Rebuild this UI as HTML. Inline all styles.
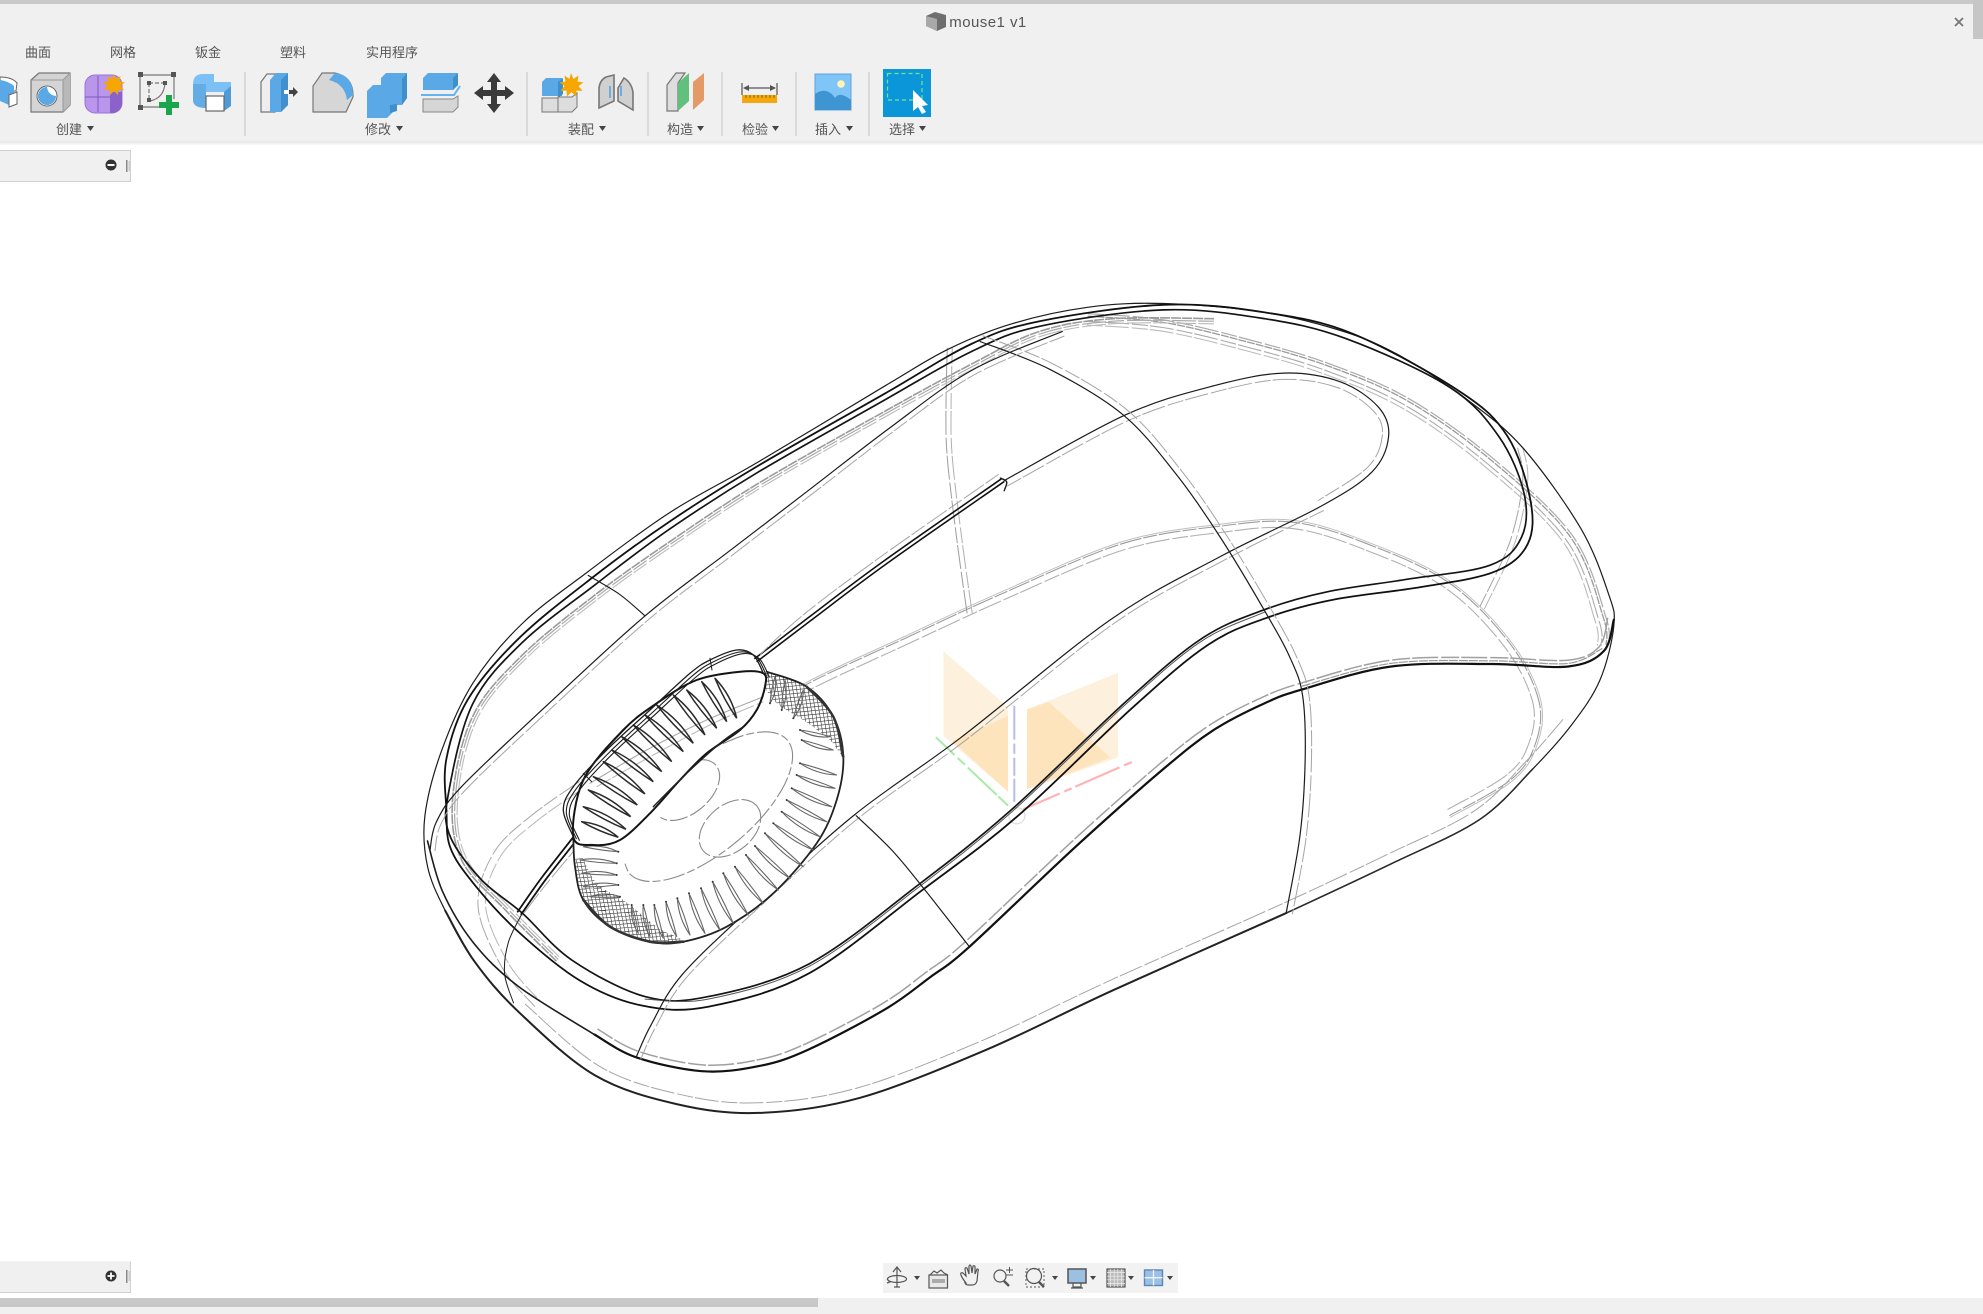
<!DOCTYPE html>
<html><head><meta charset="utf-8"><title>mouse1 v1</title>
<style>
html,body{margin:0;padding:0;background:#fff;width:1983px;height:1314px;overflow:hidden}
body{position:relative;font-family:"Liberation Sans","Noto Sans CJK SC",sans-serif}
.b{position:absolute}
.t{position:absolute;font-size:13px;line-height:16px;color:#555;transform:translateX(-50%);white-space:nowrap;filter:blur(.35px)}
svg{position:absolute;left:0;top:0}
</style></head><body>
<div class="b" style="left:0;top:0;width:1983px;height:141px;background:#f0f0f0"></div>
<div class="b" style="left:0;top:141px;width:1983px;height:4px;background:linear-gradient(#e3e3e3,#fafafa)"></div>
<div class="b" style="left:0;top:0;width:1983px;height:4px;background:#c9c9c9"></div>
<div class="b" style="left:1973px;top:0;width:10px;height:39px;background:#c6c6c6"></div>
<div class="b" style="left:0;top:150px;width:130px;height:30px;background:#f0f0f0;border:1px solid #d0d0d0;border-left:0"></div>
<div class="b" style="left:0;top:1261px;width:130px;height:30px;background:#f0f0f0;border:1px solid #d0d0d0;border-left:0;border-top-color:#f4f4f4"></div>
<div class="b" style="left:883px;top:1263px;width:295px;height:30px;background:#f2f2f2"></div>
<div class="b" style="left:0;top:1298px;width:1983px;height:16px;background:#f0f0f0"></div>
<div class="b" style="left:0;top:1298px;width:818px;height:9px;background:#c8c8c8"></div>

<div class="t" style="left:38px;top:45px">曲面</div>
<div class="t" style="left:123px;top:45px">网格</div>
<div class="t" style="left:208px;top:45px">钣金</div>
<div class="t" style="left:293px;top:45px">塑料</div>
<div class="t" style="left:392px;top:45px">实用程序</div>
<div class="t" style="left:69px;top:122px">创建</div>
<div class="t" style="left:378px;top:122px">修改</div>
<div class="t" style="left:581px;top:122px">装配</div>
<div class="t" style="left:680px;top:122px">构造</div>
<div class="t" style="left:755px;top:122px">检验</div>
<div class="t" style="left:828px;top:122px">插入</div>
<div class="t" style="left:902px;top:122px">选择</div>
<div class="t" style="left:988px;top:15px;font-size:15px;letter-spacing:.45px;color:#555">mouse1 v1</div>

<svg id="ui" width="1983" height="1314" viewBox="0 0 1983 1314" style="filter:blur(.3px)">
<!-- separators -->
<g fill="#dadada"><rect x="244" y="72" width="2" height="64"/><rect x="526" y="72" width="2" height="64"/><rect x="647" y="72" width="2" height="64"/><rect x="721" y="72" width="2" height="64"/><rect x="795" y="72" width="2" height="64"/><rect x="868" y="72" width="2" height="64"/></g>
<!-- caret triangles -->
<g fill="#444"><path d="M87 126h7l-3.500 5zM396 126h7l-3.500 5zM599 126h7l-3.500 5zM697 126h7l-3.500 5zM772 126h7l-3.500 5zM846 126h7l-3.500 5zM919 126h7l-3.500 5z"/>
<path d="M914 1276h6l-3 4zM1052 1276h6l-3 4zM1090 1276h6l-3 4zM1128 1276h6l-3 4zM1167 1276h6l-3 4z"/></g>
<!-- close -->
<path d="M1955 18l8 8M1963 18l-8 8" stroke="#777" stroke-width="1.800" fill="none"/>
<!-- doc icon -->
<path d="M926 16l9-4 11 3v12l-9 4-11-5z" fill="#6e6e6e"/><path d="M926 16l11 3v12l-11-5z" fill="#a8a8a8"/>
<!-- icon1 partial -->
<path d="M0 77q12 0 17 6l-1 8-16 0z" fill="#fff" stroke="#666"/><path d="M0 80q8 1 14 6v7l-5 3v9l-9-4z" fill="#5aa9e6"/><path d="M9 95l8-3v12l-8 3z" fill="#fff" stroke="#666"/>
<!-- icon2 -->
<path d="M31 80l8-7h31v32l-7 7H31z" fill="#d4d4d4" stroke="#777" stroke-width="1.200"/><path d="M63 80l7-7v32l-7 7z" fill="#b8b8b8"/><path d="M63 112V80h-32M63 80l7-7" fill="none" stroke="#999"/>
<circle cx="47" cy="96" r="10" fill="#fff" stroke="#666"/><path d="M47 87a9 9 0 1 0 9 9q-8-1-9-9z" fill="#5aa9e6"/>
<!-- icon3 -->
<rect x="85" y="75" width="37" height="38" rx="10" fill="#b995ec" stroke="#9a72d8"/><path d="M110 92h12v11a10 10 0 0 1-10 10h-2z" fill="#8a62ca"/><path d="M98 76v36M85 97h25" stroke="#7f5abd" fill="none"/>
<path d="M114 74l2 5 4.500-3-1 5.500 5.500 1-4.500 3 3.500 4.500-5.500-.5-.5 5.500-4-4-4 4-.5-5.500-5.500.5 3.500-4.500-4.500-3 5.500-1-1-5.500 4.500 3z" fill="#f7a600"/>
<!-- icon4 -->
<g fill="none" stroke="#777" stroke-width="1.200"><path d="M141 75h33v24M140 75v32h20"/><path d="M149 83h16M149 83v19" stroke-dasharray="4 2"/><path d="M150 101q14-3 15-18"/></g>
<g fill="#555"><rect x="138" y="72" width="5" height="5"/><rect x="171" y="72" width="5" height="5"/><rect x="138" y="105" width="5" height="5"/><rect x="147" y="81" width="4" height="4"/><rect x="163" y="81" width="4" height="4"/><rect x="147" y="98" width="4" height="4"/></g>
<path d="M166 95h6v7h7v6h-7v7h-6v-7h-7v-6h7z" fill="#1aa64a"/>
<!-- icon5 -->
<path d="M193 84q0-10 10-10h11v8l-8 0v0h25v18l-7 11v-19h-30z" fill="#7cc0f5"/><path d="M193 84h13v24q-13 0-13-8z" fill="#64ace4"/><path d="M224 92l7-6v20l-7 5z" fill="#4f9bd6"/>
<rect x="206" y="96" width="18" height="15" fill="#fff" stroke="#666" stroke-width="1.200"/>
<!-- press-pull -->
<path d="M261 112V82l6-8h8v38z" fill="#eee" stroke="#777" stroke-width="1.200"/>
<path d="M270 80l6-7h12v32l-7 7h-11z" fill="#5aa9e6"/><path d="M281 80l7-7v32l-7 7z" fill="#418fcc"/>
<path d="M284 90h9v-3l5 5-5 5v-3h-9z" fill="#444"/><rect x="284" y="90" width="5" height="4" fill="#fff"/>
<!-- fillet -->
<path d="M313 112V86l9-13h13q18 4 18 22v2l-7 15z" fill="#d6d6d6" stroke="#777" stroke-width="1.200"/>
<path d="M329 80l6-7q18 2 18 22l-6 5q-2-16-18-20z" fill="#5aa9e6"/>
<!-- combine -->
<path d="M367 91l6-6h8v-7l5-5h21v25l-5 7h-9v7l-6 6h-20z" fill="#5aa9e6"/><path d="M402 79l5-6v25l-5 7zM390 105l7-1v7l-7 2z" fill="#3f8fcb"/>
<!-- split -->
<path d="M423 78l5-5h30v12l-5 5h-30z" fill="#5aa9e6"/><path d="M453 78l5-5v12l-5 5z" fill="#3f8fcb"/>
<path d="M421 95h33l6-9" fill="none" stroke="#62b5f0" stroke-width="2"/>
<path d="M423 99h30l5-3v11l-5 5h-30z" fill="#d6d6d6" stroke="#888"/>
<!-- move -->
<path d="M494 73l7 9h-4v8h8v-4l9 7-9 7v-4h-8v8h4l-7 9-7-9h4v-8h-8v4l-9-7 9-7v4h8v-8h-4z" fill="#3a3a3a"/>
<!-- assemble -->
<path d="M542 82l4-4h16v18h-20z" fill="#5aa9e6"/><path d="M558 82l5-4v16l-5 4z" fill="#3f8fcb"/>
<rect x="542" y="98" width="16" height="14" fill="#ddd" stroke="#777"/><path d="M558 97h14l5-4v14l-5 5h-14z" fill="#ddd" stroke="#777"/>
<path d="M571 73l2.500 6 5-3.500-1 6 6 1-5 3.500 4 5-6-.5-.5 6-4.500-4.500-4.500 4.500-.5-6-6 .5 4-5-5-3.500 6-1-1-6 5 3.500z" fill="#f7a600"/>
<!-- joint -->
<g fill="#d0d0d0" stroke="#777" stroke-width="1.600"><path d="M599 108V88q1-8 7-11l8-2v26z"/><path d="M618 88l6-10q8 5 9 15v17l-15-9z"/></g>
<path d="M610 86v12M621 86v10" stroke="#4ba3e6" stroke-width="1.500" fill="none"/>
<!-- construct -->
<path d="M667 111V85l9-12h9l-7 10v28z" fill="#ddd" stroke="#777" stroke-width="1.200"/><path d="M678 83l11-10v28l-11 10z" fill="#61c07c"/><path d="M693 82l11-9v27l-11 10z" fill="#e39a66"/>
<!-- measure -->
<path d="M742 83v12M777 83v12M744 88h31" stroke="#555" stroke-width="1.200" fill="none"/><path d="M743 88l6-3v6zM776 88l-6-3v6z" fill="#555"/>
<rect x="742" y="95" width="35" height="8" fill="#f5a70c"/><path d="M746 95v3M750 95v3M754 95v3M758 95v3M762 95v3M766 95v3M770 95v3M774 95v3" stroke="#8a6a00"/>
<!-- image -->
<rect x="815" y="74" width="36" height="36" fill="#80c5f8" stroke="#5fa4d8"/><circle cx="841" cy="84" r="3.800" fill="#fdf4b5"/>
<path d="M815 110V94q6-4 11-3t9 7q3-4 7-3t9 5v10z" fill="#3f94d2"/>
<!-- select -->
<rect x="883" y="69" width="48" height="48" fill="#0a96d9"/><rect x="887.500" y="73.500" width="34.500" height="26.500" fill="none" stroke="#6fe68e" stroke-width="1.200" stroke-dasharray="4 3"/>
<path d="M913 90l15 15-6 1 4 6-4 2-4-7-5 4z" fill="#fff"/>
<!-- panel icons -->
<circle cx="111" cy="165" r="5.500" fill="#333"/><rect x="107.500" y="164" width="7" height="2" fill="#fff"/>
<rect x="126" y="160" width="1.500" height="12" fill="#888"/><rect x="128.500" y="161" width="1.500" height="10" fill="#ccc"/>
<circle cx="111" cy="1276" r="5.500" fill="#333"/><path d="M107.500 1276h7M111 1272.500v7" stroke="#fff" stroke-width="1.800"/>
<rect x="126" y="1270" width="1.500" height="13" fill="#888"/><rect x="128.500" y="1271" width="1.500" height="10" fill="#ccc"/>
<!-- bottom toolbar -->
<g fill="none" stroke="#555" stroke-width="1.200">
<path d="M897 1268v19M893 1272l4-5 4 5M894 1287h6"/><ellipse cx="897" cy="1279" rx="9.500" ry="3.500"/><path d="M887 1279l3 3-3 1" />
<rect x="929" y="1275" width="18.500" height="13" fill="#e8e8e8"/><rect x="932" y="1279" width="13" height="4" fill="#aaa" stroke="none"/><path d="M930 1275l4-4 3 2 4-3 3 3 4 2" />
<path d="M966 1283q-4-5-5-8t2-2l3 3-1-7q0-2 2-1l2 6 0-8q1-2 2 0l1 7 1-7q2-1 2 1l0 7 2-5q2 0 1 2l-1 10q-1 4-5 4h-4q-2 0-3-2z"/>
<circle cx="1000" cy="1276" r="6"/><path d="M1004 1281l5 5" stroke-width="2.400"/><path d="M1006 1270h7M1009.500 1267v6M1006 1275h7" stroke-width="1"/>
<circle cx="1034" cy="1276" r="7.500"/><path d="M1039 1282l5 5" stroke-width="2.400"/><path d="M1026 1269h18v18h-18z" stroke-dasharray="2 2" stroke-width=".9"/>
<rect x="1068" y="1269" width="18" height="14" fill="#9cc0e2" stroke-width="1.500"/><path d="M1073 1283v4h8v-4M1071 1288h12"/>
<rect x="1107" y="1269" width="18" height="18" fill="#bbb" stroke-width="1.200"/><path d="M1107 1272.600h18M1107 1276.200h18M1107 1279.800h18M1107 1283.400h18M1110.600 1269v18M1114.200 1269v18M1117.800 1269v18M1121.400 1269v18" stroke="#eee" stroke-width=".7"/>
<rect x="1144.500" y="1270" width="18" height="15.500" fill="#9cc0e2" stroke="#5c85b8" stroke-width="1.400"/><path d="M1153.500 1270v15.500M1144.500 1277.700h18" stroke="#eef4fa" stroke-width="1.300"/>
</g>
<g id="m"></g>
</svg>
<script>
var S=1.2647,NS='http://www.w3.org/2000/svg',R=document.getElementById('m');
function add(tag,a,par){var e=document.createElementNS(NS,tag);for(var k in a)e.setAttribute(k,a[k]);(par||R).appendChild(e);return e}
function off(p,d,cl){var n=p.length;return p.map(function(q,i){var a=cl?p[(i-1+n)%n]:p[Math.max(i-1,0)],b=cl?p[(i+1)%n]:p[Math.min(i+1,n-1)];var dx=b[0]-a[0],dy=b[1]-a[1],l=Math.hypot(dx,dy)||1;return [q[0]-dy/l*d,q[1]+dx/l*d]})}
function cr(p,cl){var n=p.length,s='M'+p[0][0].toFixed(1)+' '+p[0][1].toFixed(1),m=cl?n:n-1;
for(var i=0;i<m;i++){var p0=cl?p[(i-1+n)%n]:p[Math.max(i-1,0)],p1=p[i],p2=p[(i+1)%n],p3=cl?p[(i+2)%n]:p[Math.min(i+2,n-1)];
s+='C'+(p1[0]+(p2[0]-p0[0])/6).toFixed(1)+' '+(p1[1]+(p2[1]-p0[1])/6).toFixed(1)+' '+(p2[0]-(p3[0]-p1[0])/6).toFixed(1)+' '+(p2[1]-(p3[1]-p1[1])/6).toFixed(1)+' '+p2[0].toFixed(1)+' '+p2[1].toFixed(1)}
return s+(cl?'Z':'')}
function sc(p){return p.map(function(q){return [q[0]*S,q[1]*S]})}
function L(p,w,c,o){o=o||{};var q=sc(p);if(o.off)q=off(q,o.off*S,o.cl);var a={d:cr(q,o.cl),fill:'none',stroke:c,'stroke-width':w,'stroke-linecap':'round'};if(o.dash)a['stroke-dasharray']=o.dash,a['stroke-linecap']='butt';add('path',a,o.par)}
var DK='#1c1c1c',GR='#a4a4a4',DS='16 2 24 3';

/* ----- gizmo ----- */
var g=add('g',{});
function poly(pts,f){add('polygon',{points:sc(pts).map(function(q){return q.join(',')}).join(' '),fill:f},g)}
poly([[746,515],[797,559],[797,626],[746,582]],'#fdf0dc');
poly([[812,561],[884,532],[884,599],[812,624]],'#fdf0dc');
poly([[753,586],[797,566],[797,626]],'#fde4bd');
poly([[812,561],[829,555],[878,599],[812,624]],'#fde4bd');
L([[802,558],[802,634]],2,'#b9b9f2',{dash:'34 4 10 4 18 3'});
L([[740,583],[797,637]],2,'#a6eca6',{dash:'26 4 10 4 40 2'});
L([[809,640],[895,602.500]],2.200,'#fdb4b4',{dash:'40 5 8 4 48 5'});
add('circle',{cx:804*S,cy:645*S,r:8,fill:'none',stroke:'#ddd','stroke-width':1.200});

/* ----- back gray ----- */
var back=[[600,565],[640,540],[715,505],[791,470],[887,430],[965,416],[1023,413],[1081,430],[1146,461],[1194,509],[1217,555],[1213,591],[1194,617],[1146,645]];
L(back,1.100,'#9c9c9c',{dash:'22 2 14 2'});L(back,1.100,'#b0b0b0',{off:5,dash:DS});L(back,1,'#c0c0c0',{off:-1.500});
var backL=[[470,610],[420,645],[390,675],[378,717],[397,765],[423,796]];
L(backL,1,'#a8a8a8',{dash:DS});L(backL,1,'#b8b8b8',{off:-6,dash:DS});
var v1=[[749,275],[748,320],[749,362],[757,430],[765,487]];
L(v1,1,'#9c9c9c',{dash:DS});L(v1,1,'#b0b0b0',{off:-4,dash:DS});
var v2=[[1200,354],[1204,380],[1194,428],[1170,480]];
L(v2,1,'#a4a4a4',{dash:DS});L(v2,1,'#b4b4b4',{off:-4,dash:DS});
var gb=[[860,250],[920,255],[985,270],[1049,289],[1113,317],[1178,363],[1242,425],[1268,489],[1270,510]];
L(gb,1.300,'#9a9a9a',{dash:'8 1'});L(gb,1.200,'#aaa',{off:-2,dash:DS});L(gb,1.100,'#aaa',{off:4,dash:DS});L(gb,1.100,'#bbb',{off:7,dash:DS});
var gt=[[960,252],[880,252],[822,262],[768,288],[700,325],[600,382],[530,428],[471,470],[413,518],[374,566],[358,630],[365,680],[400,720],[440,760]];
L(gt,1.600,'#9a9a9a',{dash:'10 1'});L(gt,1.200,'#aaa',{off:-2,dash:DS});L(gt,1.100,'#bbb',{off:-4,dash:DS});

/* ----- silhouette ----- */
var sil=[[336,645],[338,685],[352,720],[375,760],[410,800],[470,850],[535,873],[600,880],[680,868],[780,830],[880,783],[1017,722],[1100,683],[1170,648],[1212,608],[1242,574],[1265,538],[1276,495],[1272,470],[1250,418],[1204,354],[1160,316],[1110,283],[1065,263],[1000,247],[920,240],[860,243],[800,256],[750,276],[700,305],[600,365],[530,405],[465,452],[413,493],[374,540],[349,594]];
L(sil,1.200,DK,{cl:true});
L(sil.slice(2,12),2,'#222');L(sil.slice(11,15),1.500,'#2a2a2a');
L(sil.slice(4,16),1,GR,{off:-8,dash:DS});
var rim3=[[338,665],[350,705],[374,745],[410,780],[470,818],[503,836],[555,847],[600,843],[639,830],[700,798],[735,773],[766,749],[850,670],[920,608],[960,577],[1000,556],[1030,545],[1100,527],[1180,525],[1240,527],[1268,515],[1276,490]];
L(rim3.slice(4),2.200,'#111');L(rim3.slice(0,5),1.600,DK);
L(rim3.slice(4),1.500,'#a0a0a0',{off:-5,dash:'18 2 26 3'});L(rim3.slice(16,21),1.200,'#999',{off:-2.500,dash:'9 1'});

/* ----- rims ----- */
var rim1=[[355,625],[355,659],[380,695],[413,722],[452,759],[510,788],[560,788],[640,762],[727,699],[800,640],[890,555],[950,505],[1000,482],[1049,468],[1113,458],[1178,447],[1203,425],[1205,390],[1185,345],[1146,306],[1065,268],[1000,252],[920,245],[822,258],[768,278],[700,316],[600,373],[530,418],[471,462],[413,508],[374,556]];
var rim2=[[353,600],[353,640],[356,670],[374,698],[408,735],[458,775],[507,795],[560,796],[639,770],[729,704],[805,645],[895,560],[955,510],[1003,488],[1055,474],[1125,464],[1182,452],[1208,430],[1210,395],[1192,345],[1155,310],[1070,264],[1000,247],[920,241],[822,254],[768,272],[700,311],[600,368],[530,412],[468,457],[410,505],[370,553]];
L(rim1,1.700,'#141414',{cl:true});L(rim2,1.800,'#111',{cl:true});
L([[510,790],[560,790],[640,764],[727,701],[800,642],[890,557],[950,507],[1000,484]],1,'#555');

/* ----- structure lines ----- */
var palA=[[794,380],[890,328],[960,305],[1015,295],[1060,302],[1090,322],[1098,345],[1085,373],[1045,400]];
var palB=[[1045,400],[965,440],[878,490],[760,583],[676,644],[600,712],[540,770],[515,810],[503,836]];
L(palA.concat(palB.slice(1)),1.200,DK);L(palA,1,GR,{off:5,dash:DS});L(palB,1,GR,{off:-4,dash:DS});
var tr=[[775,270],[830,292],[888,328],[930,375],[965,425],[1000,483],[1020,520],[1030,550],[1032,600],[1028,660],[1017,722]];
L(tr,1.200,DK);L(tr,1,GR,{off:-5,dash:DS});
var ul=[[840,262],[768,293],[704,338],[639,388],[575,437],[510,487],[430,560],[365,622],[345,650],[340,672]];
L(ul,1.200,DK);L(ul,1,GR,{off:-4,dash:DS});
L([[465,455],[490,470],[510,487]],1.100,DK);L([[677,645],[705,672],[730,702],[766,748]],1.200,DK);
L([[413,722],[402,745],[399,770],[406,793]],1,DK);
L([[793,380],[700,445],[640,490],[598,522]],1.600,'#111',{off:-1.200});L([[793,380],[700,445],[640,490],[598,522]],1.600,'#111',{off:1.800});
L([[793,380],[700,445],[640,490],[605,522]],1,GR,{off:6,dash:DS});
L([[791,378],[796,381],[794,388]],1.400,DK);
L([[455,663],[430,695],[411,722]],1.800,'#111',{off:-1.500});L([[455,663],[430,695],[411,722]],1.800,'#111',{off:2});
L([[460,670],[435,700],[415,726]],1,GR,{off:3,dash:DS});

/* ----- wheel ----- */
function W(p){return p.map(function(q){return [(540+q[0]/3)/S,(640+q[1]/3)/S]})}
function WL(p,w,c,o){L(W(p),w,c,o)}
function ell(cx,cy,rx,ry,t0,t1){var o=[],c=Math.cos(-40*Math.PI/180),s=Math.sin(-40*Math.PI/180);for(var t=t0;t<=t1;t+=15){var a=t*Math.PI/180,x=rx*Math.cos(a),y=ry*Math.sin(a);o.push([cx+x*c-y*s,cy+x*s+y*c])}return o}
var wo=[[100,590],[105,680],[130,780],[210,860],[330,905],[430,905],[560,860],[700,760],[830,610],[890,480],[910,350],[880,230],[800,140],[680,95]];
var ws=[[100,590],[130,420],[250,270],[350,190],[470,120],[600,95],[670,100],[675,140],[650,210],[600,270],[500,340],[420,420],[330,520],[240,600],[160,615]];
add('path',{d:cr(sc(W(wo.concat([[470,120],[250,270],[130,420]]))),true),fill:'#fff'});
/* hatch */
var defs=add('defs',{});
function clipP(id,pts){var c=add('clipPath',{id:id},defs);add('path',{d:cr(sc(W(pts)),true)},c)}
clipP('c1',[[104,640],[130,780],[210,860],[330,905],[430,905],[350,860],[250,780],[170,730],[120,640]]);
clipP('c2',[[680,95],[800,140],[880,230],[910,350],[870,300],[790,240],[710,190],[670,130]]);
function hatch(id,x0,y0,x1,y1){var gg=add('g',{'clip-path':'url(#'+id+')',stroke:'#3a3a3a','stroke-width':.6,fill:'none'});
var d='';for(var x=x0;x<x1;x+=3.800){d+='M'+x+' '+y0+'L'+(x+18)+' '+y1}for(var y=y0;y<y1;y+=3.800){d+='M'+x0+' '+y+'L'+x1+' '+(y-10)}add('path',{d:d},gg)}
hatch('c1',565,860,700,950);hatch('c2',750,660,850,770);
WL(wo,1.800,'#222');WL([[130,780],[210,860],[330,905],[430,905]],2.600,'#333');WL([[800,140],[880,230],[910,350]],2.400,'#333');
/* dashed face */
WL(ell(505,500,310,135,-60,200),1.100,'#8a8a8a',{dash:'22 3 8 3'});
WL(ell(440,450,115,70,-40,180),1.100,'#8a8a8a',{dash:'18 3'});
WL(ell(570,565,105,70,0,360),1.100,'#8a8a8a',{dash:'18 3'});
/* ribs */
function leaf(a,b,w,c,pw,bend){var dx=b[0]-a[0],dy=b[1]-a[1],l=Math.hypot(dx,dy),nx=-dy/l,ny=dx/l;
var mx=(a[0]+b[0])/2,my=(a[1]+b[1])/2;
var A=sc(W([a]))[0],B=sc(W([b]))[0],C1=sc(W([[mx+nx*(pw+bend),my+ny*(pw+bend)]]))[0],C2=sc(W([[mx-nx*(pw-bend),my-ny*(pw-bend)]]))[0];
add('path',{d:'M'+A[0].toFixed(1)+' '+A[1].toFixed(1)+'Q'+C1[0].toFixed(1)+' '+C1[1].toFixed(1)+' '+B[0].toFixed(1)+' '+B[1].toFixed(1)+'Q'+C2[0].toFixed(1)+' '+C2[1].toFixed(1)+' '+A[0].toFixed(1)+' '+A[1].toFixed(1),fill:'none',stroke:c,'stroke-width':w,'stroke-linejoin':'round'})}
var lr=[[[780,270],[870,290]],[[785,300],[880,330]],[[780,370],[890,405]],[[770,405],[885,445]],[[755,445],[875,500]],[[740,480],[860,545]],[[725,515],[840,590]],[[700,550],[820,630]],[[675,580],[790,680]],[[645,618],[750,715]],[[618,645],[715,750]],[[585,680],[670,790]],[[550,700],[625,825]],[[518,725],[580,850]],[[483,745],[540,870]],[[447,760],[495,880]],[[412,775],[450,885]],[[378,785],[410,890]],[[343,795],[370,895]],[[310,795],[330,890]],[[275,795],[295,880]],[[240,770],[150,770]],[[235,735],[130,740]],[[230,705],[125,700]],[[230,670],[120,660]],[[235,635],[130,620]],[[690,190],[705,110]],[[725,210],[735,120]],[[760,235],[790,150]]];
lr.forEach(function(r){leaf(r[0],r[1],1.100,'#666',10,6);add('circle',{cx:(540+r[0][0]/3).toFixed(1),cy:(640+r[0][1]/3).toFixed(1),r:1,fill:'#333'})});
/* slot fill */
add('path',{d:cr(sc(W(ws)),true),fill:'#fff'});
/* gray through slot */
WL([[150,430],[320,330],[500,240],[670,170]],1.100,'#aaa');WL([[170,440],[340,345],[520,250],[670,185]],1.100,'#bbb',{dash:DS});
/* upper ribs */
var tips=[[590,235],[560,245],[530,265],[495,285],[460,310],[430,335],[395,365],[365,395],[340,425],[315,462],[292,495],[272,530],[258,568],[235,592]];
var st=[[525,115],[485,125],[440,150],[400,165],[350,195],[315,225],[280,255],[245,290],[215,330],[190,365],[160,410],[145,450],[130,500],[125,545]];
tips.forEach(function(t,i){leaf(t,st[i],1.500,'#2a2a2a',13,6)});
WL(ws,2,'#141414',{cl:true});
/* bezel */
var bz=[[100,590],[70,510],[100,440],[200,330],[330,210],[450,100],[510,60],[590,30],[640,45],[670,100]];
WL(bz,1.300,DK);WL(bz.map(function(q){return [q[0]+9,q[1]+6]}),1.100,DK);WL(bz.map(function(q){return [q[0]+18,q[1]+11]}),1.100,DK);
WL([[510,55],[516,90]],1,DK);WL([[130,400],[155,425]],1,DK);
WL([[340,500],[440,400],[540,310],[610,260]],1.400,'#222');
</script>
</body></html>
